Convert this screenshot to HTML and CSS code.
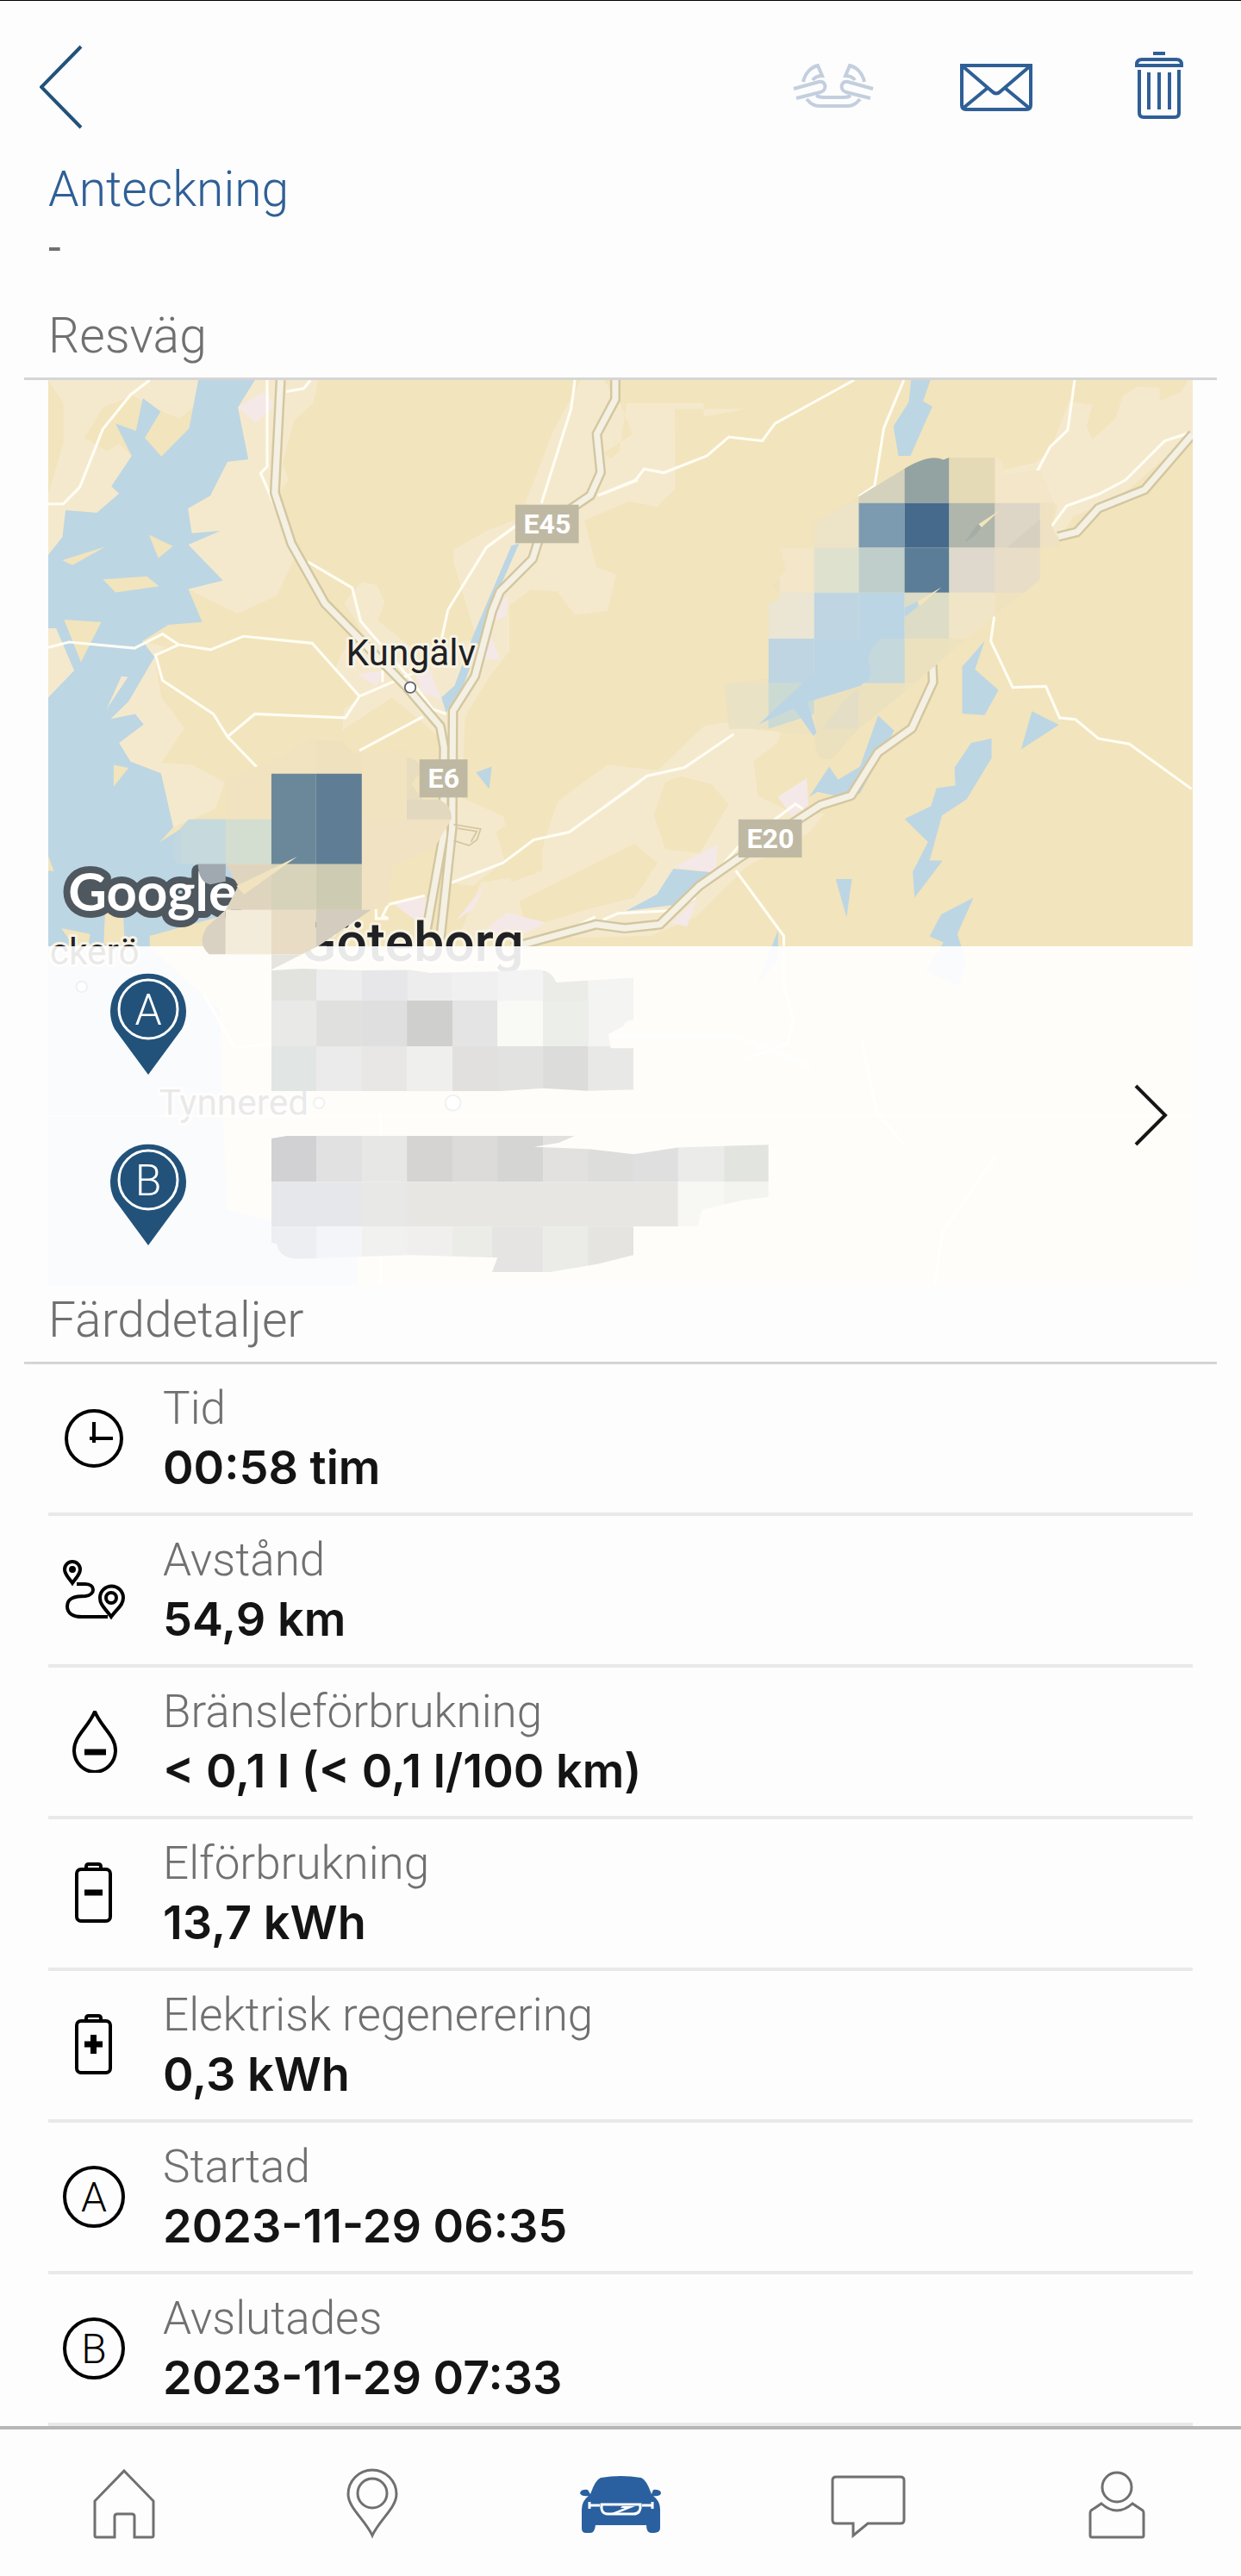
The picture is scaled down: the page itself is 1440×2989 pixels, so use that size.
FILE: index.html
```
<!DOCTYPE html>
<html lang="sv">
<head>
	<meta charset="UTF-8">
	<meta name="viewport" content="width=device-width, initial-scale=1">
	<title>Resa</title>
	<link rel="stylesheet" href="styles.css">
</head>
<body>
	<header class="topbar">
		<button class="icon-btn back" type="button" aria-label="Tillbaka">
			<svg width="50" height="98" viewBox="0 0 50 98"><path d="M48 2 2 49 48 96"/></svg>
		</button>
		<div class="tools">
			<button class="icon-btn" type="button" aria-label="Slå ihop" disabled>
				<svg width="100" height="84" viewBox="0 0 100 84">
					<path d="M15 36C17 26 24 19 32 17L37 29C31 29 28 31 26 34M86 36C84 26 77 19 69 17L64 29C70 29 73 31 75 34M4 44 33 36C42 34 43 46 35 48L7 55M96 44 67 36C58 34 57 46 65 48L93 55M19 56C25 63 29 64 35 64H65C71 64 75 63 81 56M30 52C34 54 36 54 39 54H62C65 54 67 54 70 52"/>
				</svg>
			</button>
			<button class="icon-btn" type="button" aria-label="Skicka">
				<svg width="86" height="84" viewBox="0 0 86 84">
					<path d="M3 17H83V63Q83 68 78 68H8Q3 68 3 63ZM3 17 38 47Q43 52 48 47L83 17M4 67 33 43M82 67 53 43"/>
				</svg>
			</button>
			<button class="icon-btn" type="button" aria-label="Ta bort">
				<svg width="60" height="84" viewBox="0 0 60 84">
					<path d="M23 3H37M4 17V16Q4 10 10 10H50Q56 10 56 16V17ZM7 22V72Q7 77 12 77H48Q53 77 53 72V22M18 25V68M30 25V68M42 25V68"/>
				</svg>
			</button>
		</div>
	</header>

	<main>
		<section class="note">
			<h2>Anteckning</h2>
			<p>-</p>
		</section>

		<h2 class="section-title">Resväg</h2>
		<div class="map">
			<svg class="map-canvas" viewBox="36 25 2975 2352" role="img" aria-label="Karta">
				<rect class="land" x="36" y="25" width="2975" height="2352"/>
				<!-- farmland -->
				<g class="field">
					<path d="M36 25 75 85V190L36 320V480L73 433 81 363 162 370 220 320 200 301 253 222 220 190 190 210 130 175 180 95 245 70 300 25ZM245 25V60L340 110 378 125 420 90 426 25Z"/>
					<path d="M573 25H738L725 85 675 130 645 240 660 285 625 330 670 450 675 490 630 585 528 632 400 568 490 546 400 453 483 417 409 423 399 359 457 326 502 237 556 231 529 96Z"/>
					<path d="M850 550 890 558 911 602 892 650 980 720 1150 700 1090 500V465L1180 415 1260 385 1350 155 1420 25H1740V120L1850 100 1665 100V300L1620 355 1545 340 1430 390 1460 510 1512 530 1490 625 1405 636 1360 575 1290 570 1235 610V730L1180 800 1120 900 1110 1110 1220 1160 1240 1260 1140 1340 1060 1330 1080 1100 1050 950 930 850 800 935 805 880 850 850 780 780 800 730 860 700 830 640 805 605Z"/>
					<path d="M281 703 340 720 312 745 330 850 390 930 330 1020 410 1025 495 1070 470 1140 361 1187 329 1047 250 1017 220 968 284 920 262 893 198 906 245 860 312 745Z"/>
					<path d="M1160 1330 1300 1310 1330 1210 1360 1120 1490 1025 1620 1040 1740 925 1790 915 1880 935 1950 915 1930 970 1870 1015 1880 1105 1990 1160 2055 1150 2010 1205 1850 1290 1720 1420 1600 1470 1100 1480Z"/>
					<path d="M1480 320 1560 270 1610 210 1605 125 1655 100 1665 160V310L1620 350Z"/>
					<path d="M2510 260 2600 240 2640 210 2690 80 2750 90 2735 145 2750 180 2810 125 2830 65 2870 42 2925 45V80L2980 55 3000 25H3011V165L2820 330 2700 380 2670 430 2640 430 2660 350 2560 340Z"/>
				</g>
				<g class="land">
					<path d="M1480 25H1810V85H1540L1520 210 1500 230 1480 215 1555 165 1520 80ZM1200 1200 1320 1120V1300L1240 1330ZM1610 1155 1640 1070 1680 1055 1760 1075 1805 1128 1730 1255 1640 1245ZM1260 1380 1560 1230 1620 1280 1560 1370 1440 1400 1280 1450Z"/>
				</g>
				<!-- sea and lakes -->
				<g class="water">
					<path d="M426 25H573L529 96 556 231 502 237 457 326 399 359 409 423 483 417 400 453 490 546 400 568 436 654 348 661 281 703 312 745 245 860 198 906 262 893 284 920 220 968 250 1017 329 1047 361 1187 325 1227 420 1167H497L530 1410 480 1425 300 1470V1500L480 1660 500 2180 840 2270V2377H36V850L103 780 56 670H36V480L73 433 81 363 162 370 220 320 200 301 253 222 211 138 264 157 282 72 328 107 287 175 330 224 402 151Z"/>
					<path d="M1240 455 1260 450 1205 575 1115 820 1070 890 1058 850 1092 820 1140 690ZM1148 1045 1189 1030 1182 1088Z"/>
					<g transform="translate(1478 0)">
						<path d="M801 25H851L832 80 856 94 799 222H768L755 145 795 82ZM992 703 967 777 1028 831 992 896 934 892V770ZM1115 886 1185 921 1087 985ZM957 968 1010 957V1008L945 1115 881 1157 849 1274H883L810 1370 805 1303 845 1226 784 1166 853 1132 867 1086 916 1079 914 1032ZM715 897 757 936 668 1100 600 1105 558 1095 536 1108 588 1030 611 1064 668 1030ZM605 1322H647L633 1421ZM963 1371 921 1465 945 1540 925 1600 840 1560 885 1487 849 1471 879 1414ZM183 1295 285 1305 180 1390 60 1405 140 1362ZM455 1455V1530L400 1600Z"/>
					</g>
				</g>
				<g class="land">
					<path d="M72 493 185 458 99 506ZM298 427 360 457 322 488ZM178 543 292 535 324 561 211 577ZM77 648 174 654 121 758ZM206 1025 245 1033 206 1082ZM36 1262 51 1302 36 1300ZM180 1490 185 1380 230 1400 235 1490ZM300 1490V1470L480 1420 530 1410 480 1500ZM70 1450 145 1465 140 1495H100Z"/>
					<path class="field" d="M36 670H56L103 780 36 850ZM226 795 243 797 187 882Z"/>
				</g>
				<g class="urban">
					<path d="M529 96 605 50 622 95 575 136ZM840 790 905 780 890 820ZM985 780 1025 775 1058 855 1010 840ZM1185 690 1210 750 1170 750ZM1210 600 1232 590 1225 640 1195 650ZM930 1385 1020 1370 1020 1450ZM1095 1430 1172 1337 1140 1400ZM1160 1460 1230 1410 1330 1435 1240 1480ZM1932 1108 2008 1060 2012 1130 1970 1160ZM1665 1290 1776 1232 1770 1305ZM1655 1435 1722 1375 1696 1446Z"/>
				</g>
				<!-- minor roads -->
				<g class="road">
					<path d="M36 347H75L118 303 178 152 250 63 300 25M36 720 90 706 260 722 333 685 375 713 458 726 543 691 722 709 845 847 808 903 573 893 502 952 465 893 333 806 315 740 375 713M502 952 583 1036M845 847 985 787M905 810V780M605 25V250L588 267 668 450M655 55 700 47 718 25M710 497 826 565 848 652 975 800 1035 880 1070 893M845 988 1010 900M1405 25 1395 100 1318 345M1250 405 1175 460 1075 622 1058 700M1465 325 1568 285M1568 1073 1390 1200 1298 1220 1218 1280 1080 1333M1015 1365 920 1388 905 1418 920 1425M888 1400V1425L920 1425"/>
					<g transform="translate(1478 0)">
						<path d="M0 320 85 285 107 256 158 266 270 222 327 173 414 183 447 138 653 25M782 25 730 150 706 300 665 328M1226 25 1208 155 1162 199 1120 278M1523 163 1460 183 1358 285 1288 322 1205 352 1166 405M1017 640 1008 703 1065 824 1151 821 1187 903 1228 907 1288 957 1368 971 1530 1088M340 945 212 1032 115 1054 0 1137M345 1300 470 1470 470 1600 495 1690 480 1750 370 1790M520 1140 500 1127 350 1240 290 1310M0 1428 40 1411 180 1404 240 1370M-150 1470-70 1445-20 1420"/>
					</g>
					<path d="M620 1750 520 1760 440 1620M900 1930V2377M2150 1740 2190 1930 2260 2010M2500 2040 2360 2240 2340 2377"/>
				</g>
				<!-- highways: casing first, then the light core -->
				<g class="highway-case">
					<path d="M640 25 625 318 668 450 755 605 965 820 1055 925 1065 980 1063 1210 1015 1480M1510 25V75L1462 165 1472 265 1445 325 1320 410 1295 490 1210 575 1190 625 1145 795 1088 885 1086 1190 1055 1480M1240 1500 1460 1440 1534 1450 1626 1440 1728 1340 1828 1270 2043 1130 2123 1105 2193 993 2281 930 2336 810 2334 765M2661 432 2710 420 2766 358 2886 310 3011 165"/>
				</g>
				<g class="highway">
					<path d="M640 25 625 318 668 450 755 605 965 820 1055 925 1065 980 1063 1210 1015 1480M1510 25V75L1462 165 1472 265 1445 325 1320 410 1295 490 1210 575 1190 625 1145 795 1088 885 1086 1190 1055 1480M1240 1500 1460 1440 1534 1450 1626 1440 1728 1340 1828 1270 2043 1130 2123 1105 2193 993 2281 930 2336 810 2334 765M2661 432 2710 420 2766 358 2886 310 3011 165M1510 1730H1820L2020 1810"/>
				</g>
				<path class="ramp" d="M1090 1180 1160 1192 1150 1220 1130 1235 1090 1222M1100 1190 1150 1198 1135 1225"/>

				<g class="place">
					<text x="810" y="767">Kungälv</text>
					<text class="city" x="690" y="1535">Göteborg</text>
					<text x="40" y="1543">ckerö</text>
					<text x="324" y="1935">Tynnered</text>
					<circle cx="977" cy="824" r="14"/>
					<circle cx="123" cy="1602" r="14"/>
					<circle cx="740" cy="1904" r="14"/>
					<circle cx="1088" cy="1904" r="20"/>
				</g>
				<text class="google" x="88" y="1404">Google</text>
			</svg>

			<div class="route">
				<div class="stop">
					<svg width="90" height="120" viewBox="0 0 90 120">
						<path d="M45 120 6 67A44 44 0 1 1 84 67Z"/>
						<circle cx="45" cy="44" r="34"/>
						<text x="45" y="62">A</text>
					</svg>
				</div>
				<div class="stop">
					<svg width="90" height="120" viewBox="0 0 90 120">
						<path d="M45 120 6 67A44 44 0 1 1 84 67Z"/>
						<circle cx="45" cy="44" r="34"/>
						<text x="45" y="62">B</text>
					</svg>
				</div>
				<button class="icon-btn open" type="button" aria-label="Visa resväg">
					<svg width="42" height="74" viewBox="0 0 42 74"><path d="M3 3 37 37 3 71"/></svg>
				</button>
			</div>

			<!-- blurred out addresses and start / end areas -->
			<svg class="mask" viewBox="36 25 2975 2352">
				<defs>
					<clipPath id="blur-a"><path d="M479 292 540 286 660 292 760 290 800 300 930 295 1015 289Q1045 290 1055 330L1200 316H1211V450Q1195 448 1190 470L1160 495 1165 540H1211V672L1120 676 1028 668 940 677H479Z"/></clipPath>
					<clipPath id="blur-b"><path d="M479 828 510 820H1092L1060 842 1010 855 1120 862 1211 878 1301 857 1394 852 1484 848V1015L1430 1025 1350 1055 1340 1109H1211V1200L1140 1228 1042 1254H925L936 1208 760 1200 540 1212Q495 1215 490 1165L479 1160Z"/></clipPath>
					<clipPath id="blur-c"><path d="M500 1060 616 1015 720 960 800 965 830 995 968 985V1005Q1005 1010 1003 1045L980 1075 1010 1115H1050Q1085 1130 1084 1165L1040 1240 930 1290 920 1390 875 1402 740 1495 616 1558V1518H455Q420 1490 450 1445L497 1402 530 1340 497 1283H370Q340 1230 380 1190L470 1090Z"/></clipPath>
					<clipPath id="blur-d"><path d="M665 328 784 255Q850 215 885 232L900 226H1025Q1050 245 1040 270L1136 260 1175 350 1165 400 1190 461H1136V543L1095 578 1019 635 784 835 665 932 600 1005Q550 1030 550 950L390 932H328L315 813 430 800V608L465 590 440 560 475 520 460 461H549V395Z"/></clipPath>
				</defs>
				<g transform="translate(0 1322) scale(1.286 .8145)">
					<g clip-path="url(#blur-a)">
						<path fill="#e2e3df" d="M479 280h92v108h-92z"/><path fill="#ededed" d="M570 280h92v108h-92zM753 280h92v108h-92z"/><path fill="#e7e7e9" d="M662 280h92v108h-92z"/><path fill="#f0f0f0" d="M845 280h92v108h-92z"/><path fill="#f3f3f3" d="M936 280h92v108h-92z"/><path fill="#ebebe8" d="M1028 280h92v108h-92z"/><path fill="#f4f4f2" d="M1119 280h92v254h-92z"/>
						<path fill="#e9e9e8" d="M479 388h92v146h-92z"/><path fill="#e0e0df" d="M570 388h92v146h-92z"/><path fill="#dfdfe0" d="M662 388h92v146h-92z"/><path fill="#cfcfce" d="M753 388h92v146h-92z"/><path fill="#e4e4e4" d="M845 388h92v146h-92z"/><path fill="#f9f9f6" d="M936 388h92v146h-92z"/><path fill="#eceee9" d="M1028 388h92v146h-92z"/>
						<path fill="#e1e5e4" d="M479 534h92v143h-92z"/><path fill="#ebebeb" d="M570 534h92v143h-92z"/><path fill="#e8e7e6" d="M662 534h92v143h-92z"/><path fill="#efefee" d="M753 534h92v143h-92z"/><path fill="#e1e0df" d="M845 534h92v143h-92z"/><path fill="#e2e2e1" d="M936 534h92v143h-92z"/><path fill="#dcdcdb" d="M1028 534h92v143h-92z"/><path fill="#e8e8e7" d="M1119 534h92v143h-92z"/>
					</g>
					<g clip-path="url(#blur-b)">
						<path fill="#d1d1d4" d="M479 820h92v146h-92z"/><path fill="#e1e1e2" d="M570 820h92v146h-92z"/><path fill="#e7e7e6" d="M662 820h92v146h-92z"/><path fill="#d5d4d3" d="M753 820h92v146h-92z"/><path fill="#dcdbda" d="M845 820h92v146h-92z"/><path fill="#d5d5d4" d="M936 820h92v146h-92z"/><path fill="#e2e1df" d="M1028 820h92v146h-92z"/><path fill="#dddddb" d="M1119 820h92v146h-92z"/><path fill="#dfdfdf" d="M1210 820h92v146h-92z"/><path fill="#ebebe9" d="M1301 820h94v146h-94z"/><path fill="#e2e4df" d="M1394 820h92v146h-92z"/>
						<path fill="#e6e7ea" d="M479 966h183v143h-183z"/><path fill="#e8e8e7" d="M662 966h92v143h-92z"/><path fill="#e7e6e3" d="M753 966h548v143h-548z"/><path fill="#f7f7f4" d="M1301 966h94v143h-94z"/><path fill="#f3f3ef" d="M1394 966h92v143h-92z"/>
						<path fill="#edeef1" d="M479 1109h92v145h-92z"/><path fill="#f3f5f9" d="M570 1109h92v145h-92z"/><path fill="#f1f1f0" d="M662 1109h92v145h-92z"/><path fill="#f0efed" d="M753 1109h92v145h-92z"/><path fill="#ebebe8" d="M845 1109h80v145h-80z"/><path fill="#e5e4e3" d="M925 1109h103v145h-103z"/><path fill="#ebebe7" d="M1028 1109h92v145h-92z"/><path fill="#e5e4e1" d="M1119 1109h92v145h-92z"/>
					</g>
				</g>
				<g clip-path="url(#blur-c)">
					<path fill="#f1e3bf" d="M497 950h354v217h-354z"/><path fill="#efe1be" d="M732 950h119v100h-119z"/><path fill="#f1e3bf" d="M851 985h233v300h-233z"/><path fill="#e9ddbf" d="M968 1005h40v110h-40z"/><path fill="#e1d8bf" d="M968 1115h116v52h-116z"/><path fill="#f0e2c3" d="M851 1167h233v235h-233z"/>
					<path fill="#c2d8e1" d="M350 1167h30v116h-30z"/><path fill="#c6d9dd" d="M380 1167h117v116h-117z"/><path fill="#d3ddd0" d="M497 1167h119v116h-119z"/>
					<path fill="#6b889b" d="M616 1048h116v236h-116z"/><path fill="#5f7e95" d="M732 1048h119v236h-119z"/>
					<path fill="#dfd5bf" d="M497 1283h119v119h-119z"/><path fill="#d7d3bb" d="M616 1283h116v119h-116z"/><path fill="#cdcbb2" d="M732 1283h119v119h-119z"/>
					<path fill="#d9d2c2" d="M420 1402h77v116h-77z"/><path fill="#f4ecda" d="M497 1402h119v116h-119z"/><path fill="#e8dcc5" d="M616 1402h116v116h-116z"/><path fill="#d3ccbf" d="M732 1402h145v110h-145z"/><path fill="#e6e4de" d="M616 1518h116v50h-116z"/>
				</g>
				<path fill="#f1e3bf" d="M525 1340 683 1264 545 1362Z"/>
				<path fill="#a0a8b0" d="M425 1283h72v45l-40 8q-30-5-32-53z"/>
				<g transform="translate(1478 0)">
					<g clip-path="url(#blur-d)">
						<path fill="#efe3bf" d="M315 226h870v800h-870z"/>
						<path fill="#d4d2bd" d="M665 226h119v119h-119z"/><path fill="#93a3a2" d="M784 226h116v119h-116z"/><path fill="#e5dab6" d="M900 226h119v119h-119z"/><path fill="#f3e6c9" d="M1019 226h171v119h-171zM460 461h89v117h-89z"/>
						<path fill="#ede3c6" d="M549 345h116v116h-116z"/><path fill="#7d9bb0" d="M665 345h119v116h-119z"/><path fill="#456a8c" d="M784 345h116v116h-116z"/><path fill="#b0b6ab" d="M900 345h119v116h-119z"/><path fill="#ddd5c6" d="M1019 345h117v116h-117z"/><path fill="#efe2c3" d="M1136 345h54v116h-54z"/>
						<path fill="#dfe1cf" d="M549 461h116v117h-116z"/><path fill="#bfceca" d="M665 461h119v117h-119z"/><path fill="#5b7d97" d="M784 461h116v117h-116z"/><path fill="#dfd8cd" d="M900 461h119v117h-119z"/><path fill="#e8dec7" d="M1019 461h117v117h-117z"/>
						<path fill="#ebe6d3" d="M430 578h119v119h-119z"/><path fill="#bfd5e2" d="M549 578h116v119h-116zM430 697h119v116h-119z"/><path fill="#bcd5e5" d="M665 578h119v119h-119zM549 697h235v116h-235z"/><path fill="#dddcc6" d="M784 578h116v119h-116z"/><path fill="#f1e5c7" d="M900 578h119v119h-119z"/>
						<path fill="#c5d8dc" d="M725 697h59v116h-100q20-25 5-60 10-45 36-56z"/><path fill="#ece1bf" d="M784 697h116v116h-116zM550 813h234v200h-234z"/>
						<path fill="#e9e2c4" d="M315 813h115v119h-115z"/><path fill="#cbdad3" d="M430 813h119v80l-119 39z"/><path fill="#e5dec6" d="M665 825V932H570L625 860Z"/>
					</g>
					<path fill="#bcd5e5" d="M549 785 405 920 496 878 547 950 555 942 532 862 670 820 697 790ZM784 617 818 600V614L784 641Z"/>
					<path fill="#f2e4bc" d="M975 400 1032 363 984 408ZM818 600 880 563 824 612Z"/>
					<path fill="#a4aca7" d="M975 398 984 408Q965 435 941 445Z"/>
					<path fill="#d7d0c1" d="M1136 387V461H1050Z"/>
				</g>
				<g class="shield">
					<rect x="1250" y="349" width="165" height="100"/>
					<text x="1333" y="423">E45</text>
					<rect x="1001" y="1011" width="125" height="99"/>
					<text x="1064" y="1085">E6</text>
					<rect x="1830" y="1167" width="165" height="99"/>
					<text x="1913" y="1241">E20</text>
				</g>
			</svg>
		</div>

		<h2 class="section-title">Färddetaljer</h2>
		<ul class="details">
			<li>
				<svg width="72" height="72" viewBox="0 0 72 72"><circle cx="36" cy="36" r="32"/><path d="M36 17V41M31 36H58"/></svg>
				<div>
					<p class="label">Tid</p>
					<p class="value">00:58 tim</p>
				</div>
			</li>
			<li>
				<svg width="72" height="72" viewBox="0 0 72 72">
					<path d="M11 28C7 22 2 18 2 12A9 9 0 0 1 20 12C20 18 15 22 11 28ZM56 67C50 58 43 54 43 45A13 13 0 0 1 70 45C70 54 62 58 56 67ZM16 29H26C38 29 38 42 26 43C14 43 5 45 5 55C5 63 12 67 22 67H52"/>
					<circle cx="56" cy="45" r="6"/><circle class="solid" cx="11" cy="12" r="2"/>
				</svg>
				<div>
					<p class="label">Avstånd</p>
					<p class="value">54,9 km</p>
				</div>
			</li>
			<li>
				<svg width="72" height="72" viewBox="0 0 72 72">
					<path d="M37 1C29 20 13 29 13 46A24 25 0 0 0 61 46C61 29 45 20 37 1Z"/><path class="sign" d="M25 48H50"/>
				</svg>
				<div>
					<p class="label">Bränsleförbrukning</p>
					<p class="value">&lt; 0,1 l (&lt; 0,1 l/100 km)</p>
				</div>
			</li>
			<li>
				<svg width="72" height="72" viewBox="0 0 72 72">
					<rect x="16" y="8" width="39" height="60" rx="5"/><path d="M27 8V5Q27 2 30 2H41Q44 2 44 5V8"/><path class="sign" d="M25 35H46"/>
				</svg>
				<div>
					<p class="label">Elförbrukning</p>
					<p class="value">13,7 kWh</p>
				</div>
			</li>
			<li>
				<svg width="72" height="72" viewBox="0 0 72 72">
					<rect x="16" y="8" width="39" height="60" rx="5"/><path d="M27 8V5Q27 2 30 2H41Q44 2 44 5V8"/><path class="sign" d="M25 35H46M35.500 24V46"/>
				</svg>
				<div>
					<p class="label">Elektrisk regenerering</p>
					<p class="value">0,3 kWh</p>
				</div>
			</li>
			<li>
				<svg width="72" height="72" viewBox="0 0 72 72"><circle cx="36" cy="36" r="34"/><text x="36" y="53">A</text></svg>
				<div>
					<p class="label">Startad</p>
					<p class="value">2023-11-29 06:35</p>
				</div>
			</li>
			<li>
				<svg width="72" height="72" viewBox="0 0 72 72"><circle cx="36" cy="36" r="34"/><text x="36" y="53">B</text></svg>
				<div>
					<p class="label">Avslutades</p>
					<p class="value">2023-11-29 07:33</p>
				</div>
			</li>
		</ul>
	</main>

	<nav class="tabs">
		<a href="#" aria-label="Hem">
			<svg width="100" height="100" viewBox="0 0 100 100"><path d="M50 13 84 48V88Q84 90 82 90H62V66Q62 63 59 63H42Q39 63 39 66V90H18Q16 90 16 88V48Z"/></svg>
		</a>
		<a href="#" aria-label="Plats">
			<svg width="100" height="100" viewBox="0 0 100 100"><path d="M50 88C42 70 22 56 22 40A28 28 0 0 1 78 40C78 56 58 70 50 88Z"/><circle cx="50" cy="39" r="17"/></svg>
		</a>
		<a class="active" href="#" aria-label="Bil">
			<svg width="100" height="100" viewBox="0 0 100 100">
				<path class="car" d="M13 42Q5 43 3 39Q4 34 12 35L15 40Q21 23 27 21Q50 17 74 21Q80 23 86 40L88 35Q97 34 97 39Q96 43 88 42Q96 48 96 58V80Q95 85 89 85H86Q80 85 80 76H21Q20 85 15 85H10Q5 85 5 80V58Q5 48 13 42Z"/>
				<path class="grille" d="M28 52H73Q74 63 65 63H35Q27 63 28 52ZM14 49V57M14 53H26M87 49V57M75 53H87"/>
				<path class="badge" d="M40 62 55 56H50L52 54H67L47 62Z"/>
			</svg>
		</a>
		<a href="#" aria-label="Meddelanden">
			<svg width="100" height="100" viewBox="0 0 100 100"><path d="M12 20H87Q91 20 91 24V70Q91 74 87 74H49L32 88V74H12Q8 74 8 70V24Q8 20 12 20Z"/></svg>
		</a>
		<a href="#" aria-label="Profil">
			<svg width="100" height="100" viewBox="0 0 100 100"><circle cx="50" cy="32" r="17"/><path d="M32 51Q50 67 68 51L80 59Q81 60 81 62V88Q81 90 79 90H21Q19 90 19 88V62Q19 60 20 59Z"/></svg>
		</a>
	</nav>
</body>
</html>
```
FILE: styles.css
```
body,ul,h2,p{
	margin: 0;
	padding: 0;
	list-style: none;
}
body{
	min-height: 100vh;
	box-sizing: border-box;
	display: flex;
	flex-direction: column;
	border-top: 1px solid #000;
	background: #fdfdfd;
	font-family: Roboto, "Liberation Sans", sans-serif;
	font-size: 53px;
	font-weight: 300;
	color: #707070;
}
main{
	flex: 1;
}
svg{
	display: block;
	fill: none;
}
.icon-btn{
	padding: 0;
	border: none;
	background: none;
	cursor: pointer;
}

/* header */
.topbar{
	display: flex;
	justify-content: space-between;
	align-items: center;
	padding: 51px 45px 35px 46px;
}
.topbar svg{
	stroke: #2f5f96;
	stroke-width: 4;
}
.topbar .back svg{
	stroke: #22527a;
}
.tools{
	display: flex;
	gap: 89px;
}
.tools .icon-btn{
	display: flex;
	justify-content: center;
	width: 100px;
}
.tools .icon-btn:disabled svg{
	stroke: #c3cfde;
}

/* headings */
h2{
	font-size: 57px;
	line-height: 70px;
	font-weight: 300;
}
.note{
	padding: 0 56px 30px;
}
.note h2{
	color: #2f5f96;
}
.note p{
	line-height: 64px;
	font-weight: 400;
}
.section-title{
	margin: 0 28px;
	padding: 6px 28px 13px;
	border-bottom: 3px solid #d5d5d5;
}

/* map */
.map{
	position: relative;
	margin: 0 56px;
	overflow: hidden;
}
.map-canvas{
	width: 100%;
	height: auto;
}
.mask{
	position: absolute;
	top: 0;
	left: 0;
	width: 100%;
	height: 100%;
	pointer-events: none;
}
.land{
	fill: #f2e4bc;
}
.field{
	fill: #f5e9cd;
}
.water{
	fill: #bcd6e4;
}
.urban{
	fill: #f5e8e8;
}
.road{
	stroke: #fffdf4;
	stroke-width: 7;
}
.highway-case{
	stroke: #d3c7a1;
	stroke-width: 27;
	stroke-linejoin: round;
}
.highway{
	stroke: #f4f0e3;
	stroke-width: 16;
	stroke-linejoin: round;
}
.ramp{
	stroke: #d3c7a1;
	stroke-width: 4;
}
.shield{
	fill: #bfb9a4;
	font-size: 72px;
	font-weight: 700;
	text-anchor: middle;
}
.shield text{
	fill: #fff;
}
.place{
	font-size: 95px;
	font-weight: 400;
}
.place text{
	fill: #202124;
	stroke: #f8f2e2;
	stroke-width: 14;
	stroke-linejoin: round;
	paint-order: stroke;
}
.place .city{
	font-size: 140px;
	font-weight: 500;
}
.place circle{
	fill: #fff;
	stroke: #5f6368;
	stroke-width: 4;
}
.google{
	font-family: Lato, sans-serif;
	font-size: 138px;
	font-weight: 700;
	fill: #fff;
	stroke: #4f585f;
	stroke-width: 36;
	stroke-linejoin: round;
	paint-order: stroke;
}
.route{
	position: absolute;
	left: 0;
	right: 0;
	bottom: 0;
	display: flex;
	flex-direction: column;
	background: rgba(255,255,255,0.9);
}
.stop{
	padding: 29px 71px 46px;
}
.stop + .stop{
	border-top: 3px solid rgba(255,255,255,0.6);
}
.stop path{
	fill: #22527a;
}
.stop circle{
	stroke: #fff;
	stroke-width: 3;
}
.stop text{
	fill: #fff;
	font-size: 50px;
	text-anchor: middle;
}
.open{
	position: absolute;
	top: 0;
	bottom: 0;
	right: 27px;
}
.open svg{
	stroke: #161616;
	stroke-width: 4;
}

/* trip details */
.details{
	margin: 0 56px;
}
.details li{
	display: flex;
	align-items: center;
	gap: 44px;
	padding: 17px;
	border-bottom: 4px solid #e9e9e9;
}
.details svg{
	stroke: #000;
	stroke-width: 4;
}
.details .sign{
	stroke-width: 7;
}
.details .solid{
	fill: #000;
}
.details text{
	fill: #000;
	stroke: none;
	font-size: 48px;
	text-anchor: middle;
}
.label{
	line-height: 68px;
}
.value{
	font-family: Inter, "Liberation Sans", sans-serif;
	font-size: 54px;
	line-height: 70px;
	font-weight: 600;
	color: #141414;
}

/* bottom navigation */
.tabs{
	display: grid;
	grid-template-columns: repeat(5, 1fr);
	padding: 35px 0;
	border-top: 4px solid #b6b7b7;
}
.tabs a{
	display: flex;
	justify-content: center;
}
.tabs svg{
	stroke: #707070;
	stroke-width: 3;
}
.tabs .car{
	fill: #2a609f;
	stroke: none;
}
.tabs .grille{
	stroke: #fff;
}
.tabs .badge{
	fill: #fff;
	stroke: none;
}
```
